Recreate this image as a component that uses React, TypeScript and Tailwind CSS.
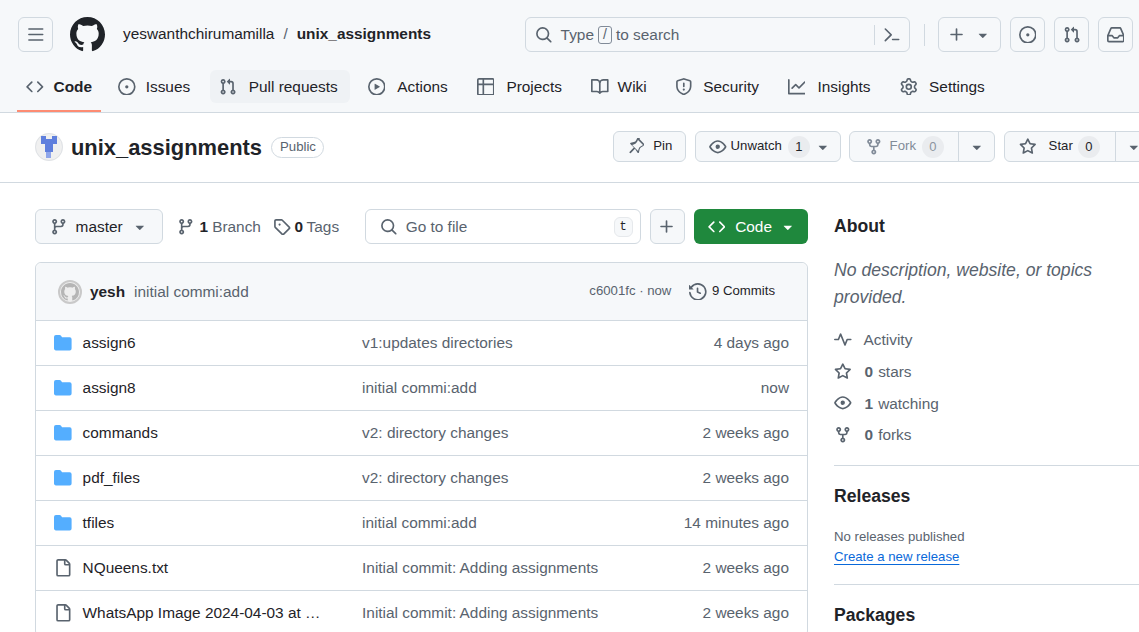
import React from 'react';

// Octicons, 16px grid
const ICONS: Record<string, string> = {
  menu: 'M1 2.75A.75.75 0 0 1 1.75 2h12.5a.75.75 0 0 1 0 1.5H1.75A.75.75 0 0 1 1 2.75Zm0 5A.75.75 0 0 1 1.75 7h12.5a.75.75 0 0 1 0 1.5H1.75A.75.75 0 0 1 1 7.75ZM1.75 12h12.5a.75.75 0 0 1 0 1.5H1.75a.75.75 0 0 1 0-1.5Z',
  mark: 'M8 0c4.42 0 8 3.58 8 8a8.013 8.013 0 0 1-5.45 7.59c-.4.08-.55-.17-.55-.38 0-.27.01-1.13.01-2.2 0-.75-.25-1.23-.54-1.48 1.78-.2 3.65-.88 3.65-3.95 0-.88-.31-1.59-.82-2.15.08-.2.36-1.02-.08-2.12 0 0-.67-.22-2.2.82-.64-.18-1.32-.27-2-.27-.68 0-1.36.09-2 .27-1.53-1.03-2.2-.82-2.2-.82-.44 1.1-.16 1.92-.08 2.12-.51.56-.82 1.28-.82 2.15 0 3.06 1.86 3.75 3.64 3.95-.23.2-.44.55-.51 1.07-.46.21-1.61.55-2.33-.66-.15-.24-.6-.83-1.23-.82-.67.01-.27.38.01.53.34.19.73.9.82 1.13.16.45.68 1.31 2.69.94 0 .67.01 1.3.01 1.49 0 .21-.15.45-.55.38A7.995 7.995 0 0 1 0 8c0-4.42 3.58-8 8-8Z',
  code: 'm11.28 3.22 4.25 4.25a.75.75 0 0 1 0 1.06l-4.25 4.25a.749.749 0 0 1-1.275-.326.749.749 0 0 1 .215-.734L13.94 8l-3.72-3.72a.749.749 0 0 1 .326-1.275.749.749 0 0 1 .734.215Zm-6.56 0a.751.751 0 0 1 1.042.018.751.751 0 0 1 .018 1.042L2.06 8l3.72 3.72a.749.749 0 0 1-.326 1.275.749.749 0 0 1-.734-.215L.47 8.53a.75.75 0 0 1 0-1.06Z',
  issue: 'M8 9.5a1.5 1.5 0 1 0 0-3 1.5 1.5 0 0 0 0 3ZM8 0a8 8 0 1 1 0 16A8 8 0 0 1 8 0ZM1.5 8a6.5 6.5 0 1 0 13 0 6.5 6.5 0 0 0-13 0Z',
  pull: 'M1.5 3.25a2.25 2.25 0 1 1 3 2.122v5.256a2.251 2.251 0 1 1-1.5 0V5.372A2.25 2.25 0 0 1 1.5 3.25Zm5.677-.177L9.573.677A.25.25 0 0 1 10 .854V2.5h1A2.5 2.5 0 0 1 13.5 5v5.628a2.251 2.251 0 1 1-1.5 0V5a1 1 0 0 0-1-1h-1v1.646a.25.25 0 0 1-.427.177L7.177 3.427a.25.25 0 0 1 0-.354ZM3.75 2.5a.75.75 0 1 0 0 1.5.75.75 0 0 0 0-1.5Zm0 9.5a.75.75 0 1 0 0 1.5.75.75 0 0 0 0-1.5Zm8.25.75a.75.75 0 1 0 1.5 0 .75.75 0 0 0-1.5 0Z',
  play: 'M8 0a8 8 0 1 1 0 16A8 8 0 0 1 8 0ZM1.5 8a6.5 6.5 0 1 0 13 0 6.5 6.5 0 0 0-13 0Zm4.879-2.773 4.264 2.559a.25.25 0 0 1 0 .428l-4.264 2.559A.25.25 0 0 1 6 10.559V5.442a.25.25 0 0 1 .379-.215Z',
  table: 'M0 1.75C0 .784.784 0 1.75 0h12.5C15.216 0 16 .784 16 1.75v12.5A1.75 1.75 0 0 1 14.25 16H1.75A1.75 1.75 0 0 1 0 14.25ZM6.5 6.5v8h7.75a.25.25 0 0 0 .25-.25V6.5Zm8-1.5V1.75a.25.25 0 0 0-.25-.25H6.5V5Zm-13 1.5v7.75c0 .138.112.25.25.25H5v-8ZM5 5V1.5H1.75a.25.25 0 0 0-.25.25V5Z',
  book: 'M0 1.75A.75.75 0 0 1 .75 1h4.253c1.227 0 2.317.59 3 1.501A3.743 3.743 0 0 1 11.006 1h4.245a.75.75 0 0 1 .75.75v10.5a.75.75 0 0 1-.75.75h-4.507a2.25 2.25 0 0 0-1.591.659l-.622.621a.75.75 0 0 1-1.06 0l-.622-.621A2.25 2.25 0 0 0 5.258 13H.75a.75.75 0 0 1-.75-.75Zm7.251 10.324.004-5.073-.002-2.253A2.25 2.25 0 0 0 5.003 2.5H1.5v9h3.757a3.75 3.75 0 0 1 1.994.574ZM8.755 4.75l-.004 7.322a3.752 3.752 0 0 1 1.992-.572H14.5v-9h-3.495a2.25 2.25 0 0 0-2.25 2.25Z',
  shield: 'M7.467.133a1.748 1.748 0 0 1 1.066 0l5.25 1.68A1.75 1.75 0 0 1 15 3.48V7c0 1.566-.32 3.182-1.303 4.682-.983 1.498-2.585 2.813-5.032 3.855a1.697 1.697 0 0 1-1.33 0c-2.447-1.042-4.049-2.357-5.032-3.855C1.32 10.182 1 8.566 1 7V3.48a1.75 1.75 0 0 1 1.217-1.667Zm.61 1.429a.25.25 0 0 0-.153 0l-5.25 1.68a.25.25 0 0 0-.174.238V7c0 1.358.275 2.666 1.057 3.86.784 1.194 2.121 2.34 4.366 3.297a.196.196 0 0 0 .154 0c2.245-.956 3.582-2.104 4.366-3.298C13.225 9.666 13.5 8.36 13.5 7V3.48a.251.251 0 0 0-.174-.237l-5.25-1.68ZM8.75 4.75v3a.75.75 0 0 1-1.5 0v-3a.75.75 0 0 1 1.5 0ZM9 10.5a1 1 0 1 1-2 0 1 1 0 0 1 2 0Z',
  graph: 'M1.5 1.75V13.5h13.75a.75.75 0 0 1 0 1.5H.75a.75.75 0 0 1-.75-.75V1.75a.75.75 0 0 1 1.5 0Zm14.28 2.53-5.25 5.25a.75.75 0 0 1-1.06 0L7 7.06 4.28 9.78a.751.751 0 0 1-1.042-.018.751.751 0 0 1-.018-1.042l3.25-3.25a.75.75 0 0 1 1.06 0L10 7.94l4.72-4.72a.751.751 0 0 1 1.042.018.751.751 0 0 1 .018 1.042Z',
  gear: 'M8 0a8.2 8.2 0 0 1 .701.031C9.444.095 9.99.645 10.16 1.29l.288 1.107c.018.066.079.158.212.224.231.114.454.243.668.386.123.082.233.09.299.071l1.103-.303c.644-.176 1.392.021 1.82.63.27.385.506.792.704 1.218.315.675.111 1.422-.364 1.891l-.814.806c-.049.048-.098.147-.088.294.016.257.016.515 0 .772-.01.147.038.246.088.294l.814.806c.475.469.679 1.216.364 1.891a7.977 7.977 0 0 1-.704 1.217c-.428.61-1.176.807-1.82.63l-1.102-.302c-.067-.019-.177-.011-.3.071a5.909 5.909 0 0 1-.668.386c-.133.066-.194.158-.211.224l-.29 1.106c-.168.646-.715 1.196-1.458 1.26a8.006 8.006 0 0 1-1.402 0c-.743-.064-1.289-.614-1.458-1.26l-.289-1.106c-.018-.066-.079-.158-.212-.224a5.738 5.738 0 0 1-.668-.386c-.123-.082-.233-.09-.299-.071l-1.103.303c-.644.176-1.392-.021-1.82-.63a8.12 8.12 0 0 1-.704-1.218c-.315-.675-.111-1.422.363-1.891l.815-.806c.05-.048.098-.147.088-.294a6.214 6.214 0 0 1 0-.772c.01-.147-.038-.246-.088-.294l-.815-.806C.635 6.045.431 5.298.746 4.623a7.92 7.92 0 0 1 .704-1.217c.428-.61 1.176-.807 1.82-.63l1.102.302c.067.019.177.011.3-.071.214-.143.437-.272.668-.386.133-.066.194-.158.211-.224l.29-1.106C6.009.645 6.556.095 7.299.03 7.53.01 7.764 0 8 0Zm-.571 1.525c-.036.003-.108.036-.137.146l-.289 1.105c-.147.561-.549.967-.998 1.189-.173.086-.34.183-.5.29-.417.278-.97.423-1.529.27l-1.103-.303c-.109-.03-.175.016-.195.045-.22.312-.412.644-.573.99-.014.031-.021.11.059.19l.815.806c.411.406.562.957.53 1.456a4.709 4.709 0 0 0 0 .582c.032.499-.119 1.05-.53 1.456l-.815.806c-.081.08-.073.159-.059.19.162.346.353.677.573.989.02.03.085.076.195.046l1.102-.303c.56-.153 1.113-.008 1.53.27.161.107.328.204.501.29.447.222.85.629.997 1.189l.289 1.105c.029.109.101.143.137.146a6.6 6.6 0 0 0 1.142 0c.036-.003.108-.036.137-.146l.289-1.105c.147-.561.549-.967.998-1.189.173-.086.34-.183.5-.29.417-.278.97-.423 1.529-.27l1.103.303c.109.029.175-.016.195-.045.22-.313.411-.644.573-.99.014-.031.021-.11-.059-.19l-.815-.806c-.411-.406-.562-.957-.53-1.456a4.709 4.709 0 0 0 0-.582c-.032-.499.119-1.05.53-1.456l.815-.806c.081-.08.073-.159.059-.19a6.464 6.464 0 0 0-.573-.989c-.02-.03-.085-.076-.195-.046l-1.102.303c-.56.153-1.113.008-1.53-.27a4.44 4.44 0 0 0-.501-.29c-.447-.222-.85-.629-.997-1.189l-.289-1.105c-.029-.11-.101-.143-.137-.146a6.6 6.6 0 0 0-1.142 0ZM11 8a3 3 0 1 1-6 0 3 3 0 0 1 6 0ZM9.5 8a1.5 1.5 0 1 0-3.001.001A1.5 1.5 0 0 0 9.5 8Z',
  search: 'M10.68 11.74a6 6 0 0 1-7.922-8.982 6 6 0 0 1 8.982 7.922l3.04 3.04a.749.749 0 0 1-.326 1.275.749.749 0 0 1-.734-.215ZM11.5 7a4.499 4.499 0 1 0-8.997 0A4.499 4.499 0 0 0 11.5 7Z',
  palette: 'm6.354 8.04-4.773 4.773a.75.75 0 1 0 1.061 1.06L7.945 8.57a.75.75 0 0 0 0-1.06L2.642 2.206a.75.75 0 0 0-1.06 1.061L6.353 8.04ZM8.75 11.5a.75.75 0 0 0 0 1.5h5.5a.75.75 0 0 0 0-1.5h-5.5Z',
  plus: 'M7.75 2a.75.75 0 0 1 .75.75V7h4.25a.75.75 0 0 1 0 1.5H8.5v4.25a.75.75 0 0 1-1.5 0V8.5H2.75a.75.75 0 0 1 0-1.5H7V2.75A.75.75 0 0 1 7.75 2Z',
  caret: 'm4.427 7.427 3.396 3.396a.25.25 0 0 0 .354 0l3.396-3.396A.25.25 0 0 0 11.396 7H4.604a.25.25 0 0 0-.177.427Z',
  inbox: 'M2.8 2.06A1.75 1.75 0 0 1 4.41 1h7.18c.7 0 1.333.417 1.61 1.06l2.74 6.395c.04.093.06.194.06.295v4.5A1.75 1.75 0 0 1 14.25 15H1.75A1.75 1.75 0 0 1 0 13.25v-4.5c0-.101.02-.202.06-.295Zm1.61.44a.25.25 0 0 0-.23.152L1.887 8H4.75a.75.75 0 0 1 .6.3L6.625 10h2.75l1.275-1.7a.75.75 0 0 1 .6-.3h2.863L11.82 2.652a.25.25 0 0 0-.23-.152Zm10.09 7h-2.875l-1.275 1.7a.75.75 0 0 1-.6.3h-3.5a.75.75 0 0 1-.6-.3L4.375 9.5H1.5v3.75c0 .138.112.25.25.25h12.5a.25.25 0 0 0 .25-.25Z',
  pin: 'm11.294.984 3.722 3.722a1.75 1.75 0 0 1-.504 2.826l-1.327.613a3.089 3.089 0 0 0-1.707 2.084l-.637 2.864a.75.75 0 0 1-1.254.36L7.25 9.811 3.53 13.53a.749.749 0 0 1-1.275-.326.749.749 0 0 1 .215-.734l3.72-3.72L3.047 5.56a.75.75 0 0 1 .36-1.254l2.864-.637a3.089 3.089 0 0 0 2.084-1.707l.613-1.327a1.75 1.75 0 0 1 2.826-.504Zm-1.06 1.06a.25.25 0 0 0-.404.073l-.613 1.327a4.587 4.587 0 0 1-3.099 2.537l-1.5.333 5.472 5.472.333-1.5a4.587 4.587 0 0 1 2.537-3.099l1.327-.613a.25.25 0 0 0 .072-.404Z',
  eye: 'M8 2c1.981 0 3.671.992 4.933 2.078 1.27 1.091 2.187 2.345 2.637 3.023a1.62 1.62 0 0 1 0 1.798c-.45.678-1.367 1.932-2.637 3.023C11.67 13.008 9.981 14 8 14c-1.981 0-3.671-.992-4.933-2.078C1.797 10.83.88 9.576.43 8.898a1.62 1.62 0 0 1 0-1.798c.45-.677 1.367-1.931 2.637-3.022C4.33 2.992 6.019 2 8 2ZM1.679 7.932a.12.12 0 0 0 0 .136c.411.622 1.241 1.75 2.366 2.717C5.176 11.758 6.527 12.5 8 12.5c1.473 0 2.825-.742 3.955-1.715 1.124-.967 1.954-2.096 2.366-2.717a.12.12 0 0 0 0-.136c-.412-.621-1.242-1.75-2.366-2.717C10.824 4.242 9.473 3.5 8 3.5c-1.473 0-2.825.742-3.955 1.715-1.124.967-1.954 2.096-2.366 2.717ZM8 10a2 2 0 1 1-.001-3.999A2 2 0 0 1 8 10Z',
  fork: 'M5 5.372v.878c0 .414.336.75.75.75h4.5a.75.75 0 0 0 .75-.75v-.878a2.25 2.25 0 1 1 1.5 0v.878a2.25 2.25 0 0 1-2.25 2.25h-1.5v2.128a2.251 2.251 0 1 1-1.5 0V8.5h-1.5A2.25 2.25 0 0 1 3.5 6.25v-.878a2.25 2.25 0 1 1 1.5 0ZM5 3.25a.75.75 0 1 0-1.5 0 .75.75 0 0 0 1.5 0Zm6.75.75a.75.75 0 1 0 0-1.5.75.75 0 0 0 0 1.5Zm-3 8.75a.75.75 0 1 0-1.5 0 .75.75 0 0 0 1.5 0Z',
  star: 'M8 .25a.75.75 0 0 1 .673.418l1.882 3.815 4.21.612a.75.75 0 0 1 .416 1.279l-3.046 2.97.719 4.192a.751.751 0 0 1-1.088.791L8 12.347l-3.766 1.98a.75.75 0 0 1-1.088-.79l.72-4.194L.818 6.374a.75.75 0 0 1 .416-1.28l4.21-.611L7.327.668A.75.75 0 0 1 8 .25Zm0 2.445L6.615 5.5a.75.75 0 0 1-.564.41l-3.097.45 2.24 2.184a.75.75 0 0 1 .216.664l-.528 3.084 2.769-1.456a.75.75 0 0 1 .698 0l2.77 1.456-.53-3.084a.75.75 0 0 1 .216-.664l2.24-2.183-3.096-.45a.75.75 0 0 1-.564-.41L8 2.694Z',
  branch: 'M9.5 3.25a2.25 2.25 0 1 1 3 2.122V6A2.5 2.5 0 0 1 10 8.5H6a1 1 0 0 0-1 1v1.128a2.251 2.251 0 1 1-1.5 0V5.372a2.25 2.25 0 1 1 1.5 0v1.836A2.493 2.493 0 0 1 6 7h4a1 1 0 0 0 1-1v-.628A2.25 2.25 0 0 1 9.5 3.25Zm-6 0a.75.75 0 1 0 1.5 0 .75.75 0 0 0-1.5 0Zm8.25-.75a.75.75 0 1 0 0 1.5.75.75 0 0 0 0-1.5ZM4.25 12a.75.75 0 1 0 0 1.5.75.75 0 0 0 0-1.5Z',
  tag: 'M1 7.775V2.75C1 1.784 1.784 1 2.75 1h5.025c.464 0 .91.184 1.238.513l6.25 6.25a1.75 1.75 0 0 1 0 2.474l-5.026 5.026a1.75 1.75 0 0 1-2.474 0l-6.25-6.25A1.752 1.752 0 0 1 1 7.775Zm1.5 0c0 .066.026.13.073.177l6.25 6.25a.25.25 0 0 0 .354 0l5.025-5.025a.25.25 0 0 0 0-.354l-6.25-6.25a.25.25 0 0 0-.177-.073H2.75a.25.25 0 0 0-.25.25ZM6 5a1 1 0 1 1 0 2 1 1 0 0 1 0-2Z',
  history: 'm.427 1.927 1.215 1.215a8.002 8.002 0 1 1-1.6 5.685.75.75 0 1 1 1.493-.154 6.5 6.5 0 1 0 1.18-4.458l1.358 1.358A.25.25 0 0 1 3.896 6H.25A.25.25 0 0 1 0 5.75V2.104a.25.25 0 0 1 .427-.177ZM7.75 4a.75.75 0 0 1 .75.75v2.992l2.028.812a.75.75 0 0 1-.557 1.392l-2.5-1A.751.751 0 0 1 7 8.25v-3.5A.75.75 0 0 1 7.75 4Z',
  folder: 'M1.75 1A1.75 1.75 0 0 0 0 2.75v10.5C0 14.216.784 15 1.75 15h12.5A1.75 1.75 0 0 0 16 13.25v-8.5A1.75 1.75 0 0 0 14.25 3H7.5a.25.25 0 0 1-.2-.1l-.9-1.2C6.07 1.26 5.55 1 5 1H1.75Z',
  file: 'M2 1.75C2 .784 2.784 0 3.75 0h6.586c.464 0 .909.184 1.237.513l2.914 2.914c.329.328.513.773.513 1.237v9.586A1.75 1.75 0 0 1 13.25 16h-9.5A1.75 1.75 0 0 1 2 14.25Zm1.75-.25a.25.25 0 0 0-.25.25v12.5c0 .138.112.25.25.25h9.5a.25.25 0 0 0 .25-.25V6h-2.75A1.75 1.75 0 0 1 9 4.25V1.5Zm6.75.062V4.25c0 .138.112.25.25.25h2.688l-.011-.013-2.914-2.914-.013-.011Z',
  pulse: 'M6 2c.306 0 .582.187.696.471L10 10.731l1.304-3.26A.751.751 0 0 1 12 7h3.25a.75.75 0 0 1 0 1.5h-2.742l-1.812 4.528a.751.751 0 0 1-1.392 0L6 4.77 4.696 8.03A.75.75 0 0 1 4 8.5H.75a.75.75 0 0 1 0-1.5h2.742l1.812-4.529A.751.751 0 0 1 6 2Z',
};

const Icon = ({ name, size = 17.6, className = '' }: { name: string; size?: number; className?: string }) => (
  <svg width={size} height={size} viewBox="0 0 16 16" fill="currentColor" className={`shrink-0 ${className}`}>
    <path d={ICONS[name]} />
  </svg>
);

const TABS = [
  { label: 'Code', icon: 'code', cls: 'gap-[10px] px-[9px] font-bold', active: true },
  { label: 'Issues', icon: 'issue', cls: 'ml-[8px] gap-[10px] px-[9px]' },
  { label: 'Pull requests', icon: 'pull', cls: 'ml-[11px] gap-[12px] pr-[12px] pl-[9px] bg-[#eff2f5]' },
  { label: 'Actions', icon: 'play', cls: 'ml-[9px] gap-[12px] px-[9px]' },
  { label: 'Projects', icon: 'table', cls: 'ml-[11px] gap-[12px] px-[9px]' },
  { label: 'Wiki', icon: 'book', cls: 'ml-[11px] gap-[9px] px-[9px]' },
  { label: 'Security', icon: 'shield', cls: 'ml-[10px] gap-[11px] px-[9px]' },
  { label: 'Insights', icon: 'graph', cls: 'ml-[11px] gap-[12px] px-[9px]' },
  { label: 'Settings', icon: 'gear', cls: 'ml-[11px] gap-[12px] px-[9px]' },
];

const FILES = [
  { name: 'assign6', dir: true, message: 'v1:updates directories', date: '4 days ago' },
  { name: 'assign8', dir: true, message: 'initial commi:add', date: 'now' },
  { name: 'commands', dir: true, message: 'v2: directory changes', date: '2 weeks ago' },
  { name: 'pdf_files', dir: true, message: 'v2: directory changes', date: '2 weeks ago' },
  { name: 'tfiles', dir: true, message: 'initial commi:add', date: '14 minutes ago' },
  { name: 'NQueens.txt', dir: false, message: 'Initial commit: Adding assignments', date: '2 weeks ago' },
  { name: 'WhatsApp Image 2024-04-03 at …', dir: false, message: 'Initial commit: Adding assignments', date: '2 weeks ago' },
];

const Identicon = () => (
  <svg width="28" height="28" viewBox="0 0 28 28" className="shrink-0">
    <circle cx="14" cy="14" r="14" fill="#f0f0f0" />
    <circle cx="14" cy="14" r="13.5" fill="none" stroke="#dfe2e6" />
    <path d="M6 3h5v3h6V3h5v8h-4v8h-8v-8H6z" fill="#5f7fdd" />
    <path d="M11 19h5v6h-5z" fill="#8fa6ea" />
  </svg>
);

const IconButton = ({ name }: { name: string }) => (
  <button className="flex h-[35px] w-[35px] items-center justify-center rounded-[6px] border border-[#d1d9e0] text-[#59636e]">
    <Icon name={name} />
  </button>
);

const Counter = ({ value, muted }: { value: string; muted?: boolean }) => (
  <span
    className={`flex h-[22px] min-w-[22px] items-center justify-center rounded-full bg-[#eaecef] px-[7px] text-[13px] ${
      muted ? 'text-[#8c959f]' : 'text-[#1f2328]'
    }`}
  >
    {value}
  </span>
);

const StatRow = ({ icon, count, label }: { icon: string; count: string; label: string }) => (
  <div className="flex h-[31.7px] items-center text-[15.4px] text-[#59636e]">
    <Icon name={icon} className="mr-[13px]" />
    <b className="mr-[5px]">{count}</b>
    {label}
  </div>
);

export default function App() {
  return (
    <div className="h-[632px] w-[1139px] overflow-hidden bg-white font-['Liberation_Sans',Arial,sans-serif] text-[#1f2328]">
      {/* --- Top bar --- */}
      <header className="h-[113px] border-b border-[#d1d9e0] bg-[#f6f8fa]">
        <div className="flex h-[70px] items-start pt-[17px] pl-[18px]">
          <IconButton name="menu" />
          <Icon name="mark" size={35} className="ml-[17px] text-[#1f2328]" />
          <div className="ml-[18px] flex h-[34px] w-[402px] items-center text-[15.4px]">
            <span>yeswanthchirumamilla</span>
            <span className="mx-[9px] text-[#59636e]">/</span>
            <span className="font-bold">unix_assignments</span>
          </div>
          <div className="flex h-[35px] w-[385px] items-center rounded-[6px] border border-[#d1d9e0] pl-[9px] text-[15.4px] text-[#59636e]">
            <Icon name="search" />
            <span className="ml-[8px]">Type</span>
            <span className="mx-[4px] flex h-[18px] w-[14px] items-center justify-center rounded-[3px] border border-[#818b98] text-[14px] font-light">
              /
            </span>
            <span>to search</span>
            <span className="ml-auto h-[20px] w-px bg-[#d1d9e0]" />
            <Icon name="palette" className="mx-[8px]" />
          </div>
          <span className="mx-[13.5px] mt-[7px] h-[22px] w-px bg-[#d1d9e0]" />
          <button className="flex h-[35px] w-[63px] items-center justify-center gap-[8px] rounded-[6px] border border-[#d1d9e0] text-[#59636e]">
            <Icon name="plus" />
            <Icon name="caret" />
          </button>
          <div className="ml-[9px] flex gap-[9px]">
            <IconButton name="issue" />
            <IconButton name="pull" />
            <IconButton name="inbox" />
          </div>
        </div>
        <nav className="flex h-[42px] pl-[17px]">
          {TABS.map(({ label, icon, cls, active }) => (
            <div key={label} className={`relative flex h-[33px] items-center rounded-[6px] text-[15.4px] ${cls}`}>
              <Icon name={icon} className="text-[#59636e]" />
              {label}
              {active && <span className="absolute right-0 bottom-[-9px] left-0 h-[2px] bg-[#fd8c73]" />}
            </div>
          ))}
        </nav>
      </header>

      {/* --- Repo title --- */}
      <div className="flex h-[70px] items-start border-b border-[#d1d9e0] pt-[18px]">
        <div className="flex h-[31px] w-[613px] shrink-0 items-center pl-[35px]">
          <Identicon />
          <span className="mt-[4px] ml-[8px] text-[21.9px] font-bold">unix_assignments</span>
          <span className="mt-[1px] ml-[9px] flex h-[21px] items-center rounded-full border border-[#d1d9e0] pr-[7px] pl-[8px] text-[13.2px] text-[#59636e]">
            Public
          </span>
        </div>
        <div className="flex shrink-0 text-[13.2px]">
          <button className="flex h-[31px] w-[73px] items-center justify-center gap-[9px] rounded-[6px] border border-[#d1d9e0] bg-[#f6f8fa]">
            <Icon name="pin" className="text-[#59636e]" />
            <span className="mb-[2px]">Pin</span>
          </button>
          <button className="ml-[9px] flex h-[31px] w-[146px] items-center gap-[4px] rounded-[6px] border border-[#d1d9e0] bg-[#f6f8fa] pl-[13px]">
            <Icon name="eye" className="text-[#59636e]" />
            <span className="mb-[2px]">Unwatch</span>
            <span className="ml-[2px]">
              <Counter value="1" />
            </span>
            <Icon name="caret" className="text-[#59636e]" />
          </button>
          <div className="ml-[8px] flex h-[31px] w-[146px] rounded-[6px] border border-[#d1d9e0] bg-[#f6f8fa]">
            <div className="flex w-[109px] items-center border-r border-[#d1d9e0] pl-[15px] text-[#818b98]">
              <Icon name="fork" className="mr-[7px]" />
              <span className="mb-[2px]">Fork</span>
              <span className="ml-[6px]">
                <Counter value="0" muted />
              </span>
            </div>
            <div className="flex flex-1 items-center justify-center text-[#59636e]">
              <Icon name="caret" />
            </div>
          </div>
          <div className="ml-[9px] flex h-[31px] w-[170px] rounded-[6px] border border-[#d1d9e0] bg-[#f6f8fa]">
            <div className="flex w-[111px] shrink-0 items-center border-r border-[#d1d9e0] pl-[14px]">
              <Icon name="star" className="mr-[12px] text-[#59636e]" />
              <span className="mb-[2px]">Star</span>
              <span className="ml-[5px]">
                <Counter value="0" />
              </span>
            </div>
            <div className="flex flex-1 items-center pl-[9px] text-[#59636e]">
              <Icon name="caret" />
            </div>
          </div>
        </div>
      </div>

      {/* --- Main --- */}
      <main className="flex pt-[26px] pl-[35px]">
        <section className="w-[773px] shrink-0">
          <div className="flex h-[35px] items-center text-[15.4px]">
            <button className="flex h-[35px] w-[128px] shrink-0 items-center rounded-[6px] border border-[#d1d9e0] bg-[#f6f8fa] pl-[14px]">
              <Icon name="branch" className="text-[#59636e]" />
              <span className="ml-[8px]">master</span>
              <Icon name="caret" className="ml-[8px] text-[#59636e]" />
            </button>
            <Icon name="branch" className="ml-[14px] text-[#59636e]" />
            <b className="ml-[5px]">1</b>
            <span className="ml-[4px] text-[#59636e]">Branch</span>
            <Icon name="tag" className="ml-[12px] text-[#59636e]" />
            <b className="ml-[4px]">0</b>
            <span className="ml-[3.5px] text-[#59636e]">Tags</span>
            <div className="ml-[25.5px] flex h-[35px] w-[276px] shrink-0 items-center rounded-[6px] border border-[#d1d9e0] pr-[7px] pl-[14px] text-[#59636e]">
              <Icon name="search" />
              <span className="ml-[8.5px]">Go to file</span>
              <span className="ml-auto flex h-[20px] w-[19px] items-center justify-center rounded-[6px] border border-[#e6e9ec] bg-[#f6f8fa] font-['Liberation_Mono',monospace] text-[12px] text-[#1f2328]">
                t
              </span>
            </div>
            <button className="ml-[9px] flex h-[35px] w-[35px] shrink-0 items-center justify-center rounded-[6px] border border-[#d1d9e0] bg-[#f6f8fa] text-[#59636e]">
              <Icon name="plus" />
            </button>
            <button className="ml-[9px] flex h-[35px] w-[114px] shrink-0 items-center rounded-[6px] bg-[#1f883d] pl-[14px] font-medium text-white">
              <Icon name="code" />
              <span className="ml-[10px]">Code</span>
              <Icon name="caret" className="ml-[7px]" />
            </button>
          </div>

          <div className="mt-[18px] rounded-[6px] border border-[#d1d9e0]">
            <div className="flex h-[58px] items-center rounded-t-[6px] border-b border-[#d1d9e0] bg-[#f6f8fa] pr-[32px] pl-[22px] text-[15.4px]">
              <span className="flex h-[24px] w-[24px] items-center justify-center rounded-full border-[2px] border-[#c9c9c9] bg-[#eeeeee]">
                <Icon name="mark" size={18} className="text-[#b5b5b5]" />
              </span>
              <b className="ml-[8px]">yesh</b>
              <span className="ml-[9px] text-[#59636e]">initial commi:add</span>
              <span className="mb-[2px] ml-auto text-[13.2px] text-[#59636e]">c6001fc · now</span>
              <Icon name="history" className="ml-[18px] text-[#59636e]" />
              <span className="mb-[2px] ml-[5px] text-[13.2px]">9 Commits</span>
            </div>
            {FILES.map((file) => (
              <div
                key={file.name}
                className="flex h-[45px] items-center border-b border-[#d1d9e0] pr-[18px] pl-[18px] text-[15.4px]"
              >
                {file.dir ? (
                  <Icon name="folder" className="text-[#54aeff]" />
                ) : (
                  <Icon name="file" className="text-[#59636e]" />
                )}
                <span className="ml-[11px] w-[279.5px] shrink-0 whitespace-nowrap">{file.name}</span>
                <span className="text-[#59636e]">{file.message}</span>
                <span className="ml-auto text-[#59636e]">{file.date}</span>
              </div>
            ))}
          </div>
        </section>

        <aside className="ml-[26px] w-[320px] shrink-0">
          <h2 className="text-[17.6px] leading-[34px] font-bold">About</h2>
          <p className="mt-[14px] w-[290px] text-[17.6px] leading-[27px] text-[#59636e] italic">
            No description, website, or topics provided.
          </p>
          <div className="mt-[13px]">
            <div className="flex h-[31.7px] items-center text-[15.4px] text-[#59636e]">
              <Icon name="pulse" className="mr-[12px]" />
              Activity
            </div>
            <StatRow icon="star" count="0" label="stars" />
            <StatRow icon="eye" count="1" label="watching" />
            <StatRow icon="fork" count="0" label="forks" />
          </div>
          <div className="mt-[14px] border-t border-[#d1d9e0] pt-[17px]">
            <h2 className="text-[17.6px] leading-[26px] font-bold">Releases</h2>
            <p className="mt-[18px] text-[13.2px] leading-[20px] text-[#59636e]">No releases published</p>
            <a className="block text-[13.2px] leading-[20px] text-[#0969da] underline underline-offset-[3px]">
              Create a new release
            </a>
          </div>
          <div className="mt-[17px] border-t border-[#d1d9e0] pt-[17px]">
            <h2 className="text-[17.6px] leading-[26px] font-bold">Packages</h2>
          </div>
        </aside>
      </main>
    </div>
  );
}
